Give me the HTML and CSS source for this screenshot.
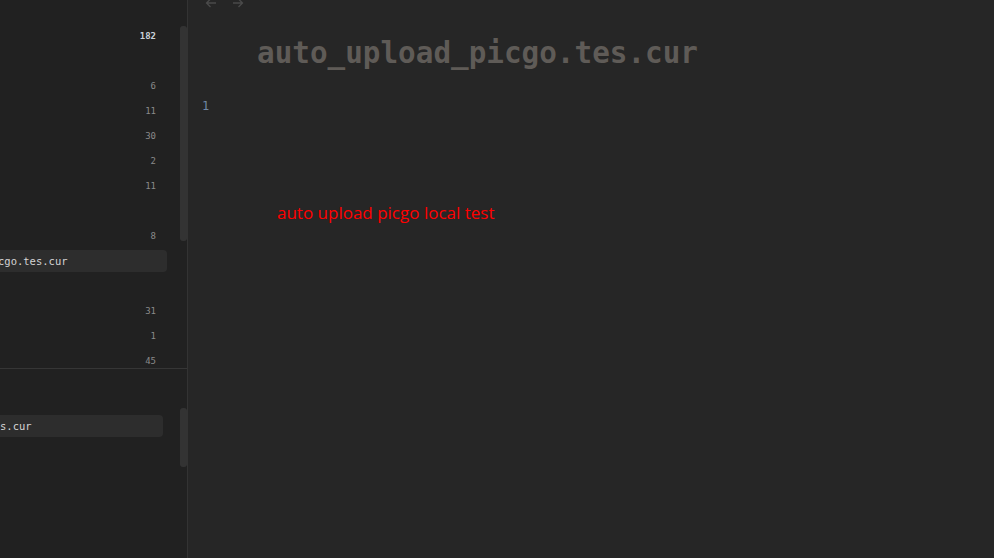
FILE: index.html
```html
<!DOCTYPE html>
<html>
<head>
<meta charset="utf-8">
<link rel="stylesheet" href="styles.css">
</head>
<body>
<div class="app">
  <aside class="sidebar">
    <section class="pane pane-top">
      <div class="list">
        <div class="row"><span class="name"></span><span class="count strong">182</span></div>
        <div class="row"><span class="name"></span><span class="count"></span></div>
        <div class="row"><span class="name"></span><span class="count">6</span></div>
        <div class="row"><span class="name"></span><span class="count">11</span></div>
        <div class="row"><span class="name"></span><span class="count">30</span></div>
        <div class="row"><span class="name"></span><span class="count">2</span></div>
        <div class="row"><span class="name"></span><span class="count">11</span></div>
        <div class="row"><span class="name"></span><span class="count"></span></div>
        <div class="row"><span class="name"></span><span class="count">8</span></div>
        <div class="row selected"><span class="name clip">cgo.tes.cur</span><span class="count"></span></div>
        <div class="row"><span class="name"></span><span class="count"></span></div>
        <div class="row"><span class="name"></span><span class="count">31</span></div>
        <div class="row"><span class="name"></span><span class="count">1</span></div>
        <div class="row"><span class="name"></span><span class="count">45</span></div>
      </div>
      <div class="scrollbar scroll-top"></div>
    </section>
    <section class="pane pane-bottom">
      <div class="list list-bottom">
        <div class="row row-b"><span class="name"></span></div>
        <div class="row row-b selected"><span class="name clip2">s.cur</span></div>
      </div>
      <div class="scrollbar scroll-bottom"></div>
    </section>
  </aside>
  <main class="editor">
    <div class="nav">
      <svg class="arrow" width="12" height="12" viewBox="0 0 12 12"><path d="M11 6H1.5M5.5 2L1.5 6L5.5 10" fill="none" stroke="#4a4a4a" stroke-width="1.3"/></svg>
      <svg class="arrow" width="12" height="12" viewBox="0 0 12 12"><path d="M1 6H10.5M6.5 2L10.5 6L6.5 10" fill="none" stroke="#4a4a4a" stroke-width="1.3"/></svg>
    </div>
    <h1 class="title">auto_upload_picgo.tes.cur</h1>
    <div class="line"><span class="lineno">1</span></div>
    <p class="note">auto upload picgo local test</p>
  </main>
</div>
</body>
</html>
```
FILE: styles.css
```css
* { box-sizing: border-box; }
html, body { margin: 0; padding: 0; height: 100%; overflow: hidden; background: #262626; }
.app { display: flex; width: 994px; height: 558px; }
.sidebar { width: 188px; flex: none; background: #212121; border-right: 1px solid #333333; display: flex; flex-direction: column; }
.pane { position: relative; overflow: hidden; display: flex; }
.pane-top { height: 369px; border-bottom: 1px solid #363636; padding-top: 25px; }
.pane-bottom { flex: 1; padding-top: 21px; }
.list { width: 167px; display: flex; flex-direction: column; gap: 3px; }
.list-bottom { width: 163px; }
.row { height: 22px; display: flex; align-items: center; justify-content: space-between; padding-right: 11px; border-radius: 4px; font-family: "DejaVu Sans Mono", monospace; flex: none; }
.row.selected { background: #2d2d2d; border-top-left-radius: 0; border-bottom-left-radius: 0; }
.name { font-size: 10.5px; color: #d4d4d4; white-space: nowrap; }
.clip { margin-left: -2px; }
.clip2 { margin-left: 0; }
.count { font-size: 9px; color: #8a8a8a; }
.count.strong { color: #c9d2da; font-weight: bold; }
.scrollbar { position: absolute; left: 180px; width: 7px; background: #333333; border-radius: 3px; }
.scroll-top { top: 26px; height: 215px; }
.scroll-bottom { top: 39px; height: 59px; }
.editor { flex: 1; background: #262626; padding-left: 14px; }
.nav { display: flex; gap: 15px; margin-top: -3px; height: 12px; padding-left: 3px; }
.arrow { display: block; }
.title { margin: 26px 0 0 55px; font-family: "DejaVu Sans Mono", monospace; font-weight: bold; font-size: 29.3px; line-height: 36px; color: #5f5b57; }
.line { margin-top: 25px; height: 16px; }
.lineno { font-family: "DejaVu Sans Mono", monospace; font-size: 12px; color: #7088a4; line-height: 16px; }
.note { margin: 90px 0 0 75px; font-family: "Open Sans", sans-serif; font-size: 17px; line-height: 22px; color: #ff0000; }
```
